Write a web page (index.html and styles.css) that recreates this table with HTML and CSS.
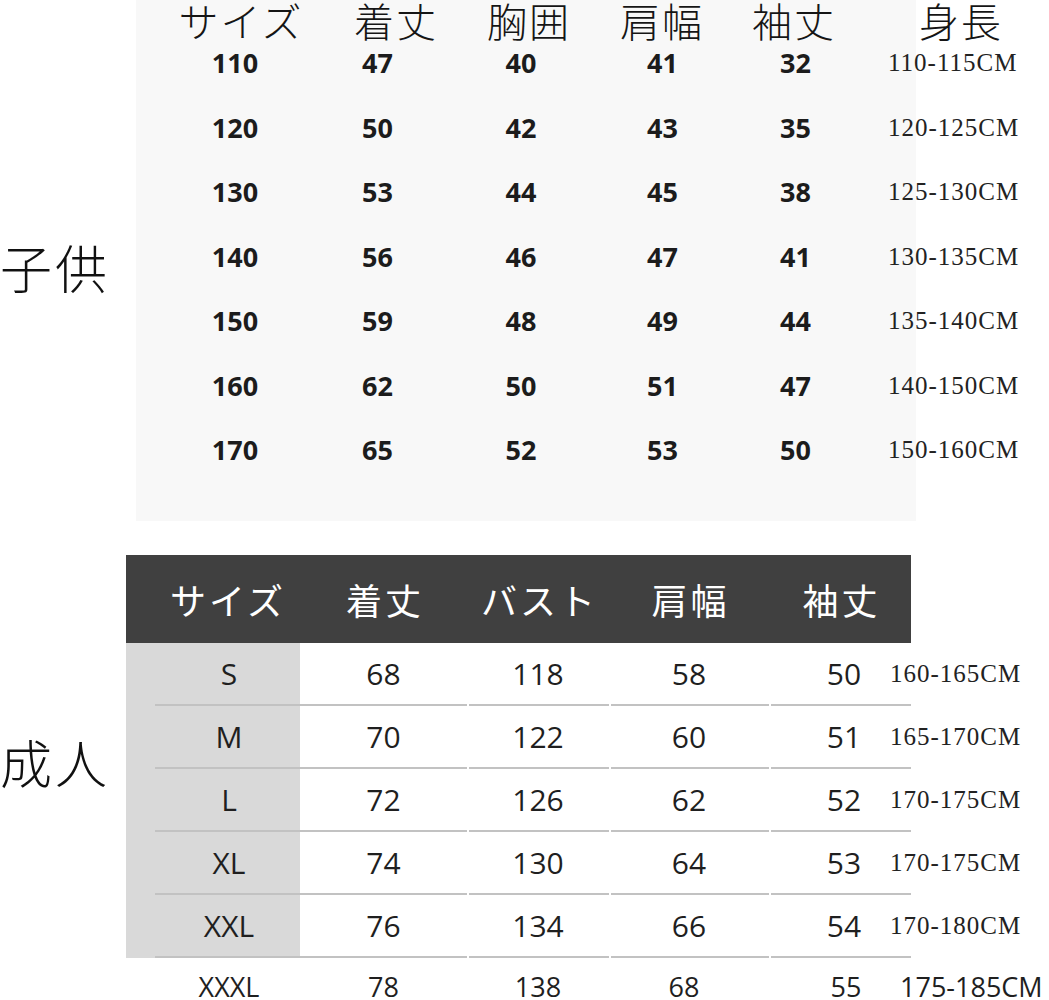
FILE: index.html
```html
<!DOCTYPE html>
<html lang="ja">
<head>
<meta charset="utf-8">
<title>サイズ表</title>
<link rel="stylesheet" href="styles.css">
</head>
<body>
<div class="page">
  <section class="kids">
    <div class="side kids-side"><span class="label">子供</span></div>
    <div class="kids-box">
      <div class="kids-head">
        <div>サイズ</div><div>着丈</div><div>胸囲</div><div>肩幅</div><div>袖丈</div><div>身長</div>
      </div>
      <div class="kids-body">
        <div class="n">110</div><div class="n">47</div><div class="n">40</div><div class="n">41</div><div class="n">32</div><div class="h">110-115CM</div>
        <div class="n">120</div><div class="n">50</div><div class="n">42</div><div class="n">43</div><div class="n">35</div><div class="h">120-125CM</div>
        <div class="n">130</div><div class="n">53</div><div class="n">44</div><div class="n">45</div><div class="n">38</div><div class="h">125-130CM</div>
        <div class="n">140</div><div class="n">56</div><div class="n">46</div><div class="n">47</div><div class="n">41</div><div class="h">130-135CM</div>
        <div class="n">150</div><div class="n">59</div><div class="n">48</div><div class="n">49</div><div class="n">44</div><div class="h">135-140CM</div>
        <div class="n">160</div><div class="n">62</div><div class="n">50</div><div class="n">51</div><div class="n">47</div><div class="h">140-150CM</div>
        <div class="n">170</div><div class="n">65</div><div class="n">52</div><div class="n">53</div><div class="n">50</div><div class="h">150-160CM</div>
      </div>
    </div>
  </section>

  <section class="adult">
    <div class="side adult-side"><span class="label">成人</span></div>
    <div class="adult-main">
      <div class="adult-head">
        <div class="c1">サイズ</div><div>着丈</div><div>バスト</div><div>肩幅</div><div>袖丈</div>
      </div>
      <div class="arow">
        <div class="cells"><div class="sz">S</div><div class="c2">68</div><div>118</div><div>58</div><div class="c5">50</div></div>
        <div class="h">160-165CM</div>
      </div>
      <div class="arow">
        <div class="cells"><div class="sz">M</div><div class="c2">70</div><div>122</div><div>60</div><div class="c5">51</div></div>
        <div class="h">165-170CM</div>
      </div>
      <div class="arow">
        <div class="cells"><div class="sz">L</div><div class="c2">72</div><div>126</div><div>62</div><div class="c5">52</div></div>
        <div class="h">170-175CM</div>
      </div>
      <div class="arow">
        <div class="cells"><div class="sz">XL</div><div class="c2">74</div><div>130</div><div>64</div><div class="c5">53</div></div>
        <div class="h">170-175CM</div>
      </div>
      <div class="arow">
        <div class="cells"><div class="sz">XXL</div><div class="c2">76</div><div>134</div><div>66</div><div class="c5">54</div></div>
        <div class="h">170-180CM</div>
      </div>
      <div class="arow last">
        <div class="cells"><div class="sz">XXXL</div><div class="c2">78</div><div>138</div><div class="c4">68</div><div class="c5">55</div></div>
        <div class="h">175-185CM</div>
      </div>
    </div>
  </section>
</div>
</body>
</html>
```

FILE: styles.css
```css
html, body {
  margin: 0;
  padding: 0;
  background: #ffffff;
  overflow: hidden;
}

.page {
  width: 1049px;
}

/* ---------- side labels ---------- */
.side {
  flex: none;
}

.label {
  display: block;
  font-family: "Noto Sans CJK JP", sans-serif;
  font-weight: 300;
  font-size: 52px;
  line-height: 52px;
  letter-spacing: 3px;
  color: #111111;
  white-space: nowrap;
}

/* ---------- kids table ---------- */
.kids {
  display: flex;
  height: 521px;
}

.kids-side {
  width: 136px;
  display: flex;
  align-items: center;
  padding-top: 13px;
  box-sizing: border-box;
}

.kids-box {
  width: 780px;
  height: 521px;
  background: #f8f8f8;
}

.kids-head {
  display: grid;
  grid-template-columns: 210px 100px 166px 100px 164px 170px;
  width: 910px;
  height: 43px;
  font-family: "Noto Sans CJK JP", sans-serif;
  font-weight: 300;
  font-size: 40px;
  line-height: 40px;
  letter-spacing: 2px;
  text-align: center;
  color: #151515;
  white-space: nowrap;
}

.kids-body {
  display: grid;
  grid-template-columns: 198px 87px 200px 83px 183px 150px;
  grid-auto-rows: 64.5px;
  width: 901px;
}

.kids-body .n {
  font-family: "Open Sans", "Noto Sans", sans-serif;
  font-weight: 700;
  font-size: 27px;
  line-height: 40px;
  text-align: center;
  color: #1c1c1c;
}

.kids-body .h {
  font-family: "Liberation Serif", serif;
  font-size: 25px;
  line-height: 40px;
  letter-spacing: 1px;
  padding-left: 1px;
  color: #222222;
  white-space: nowrap;
}

/* ---------- adult table ---------- */
.adult {
  display: flex;
  margin-top: 34px;
}

.adult-side {
  width: 126px;
  padding-top: 181px;
  box-sizing: border-box;
}

.adult-main {
  width: 923px;
}

.adult-head {
  display: grid;
  grid-template-columns: 174px 167px 142px 160px 142px;
  align-items: center;
  width: 785px;
  height: 88px;
  background: #404040;
  font-family: "Noto Sans CJK JP", sans-serif;
  font-size: 36px;
  line-height: 36px;
  letter-spacing: 3px;
  color: #ffffff;
  text-align: center;
  white-space: nowrap;
}

.adult-head > div {
  padding-left: 3px;
}

.adult-head > .c1 {
  padding-left: 30px;
}

.arow {
  display: flex;
  height: 63px;
}

.cells {
  flex: none;
  display: grid;
  grid-template-columns: 174px 167px 142px 160px 142px;
  width: 785px;
}

.cells > div {
  font-family: "Open Sans", "Noto Sans", sans-serif;
  font-size: 30px;
  line-height: 61px;
  text-align: center;
  color: #1f1f1f;
  background: linear-gradient(#c2c2c2, #c2c2c2) right bottom / calc(100% - 2px) 2px no-repeat;
}

.cells > .c2 {
  background-size: 100% 2px;
}

.cells > .c5 {
  padding-left: 8px;
}

.cells > .sz {
  padding-left: 32px;
  background:
    linear-gradient(#c2c2c2, #c2c2c2) right bottom / calc(100% - 29px) 2px no-repeat,
    #d9d9d9;
}

.arow .h {
  margin-left: -21px;
  font-family: "Liberation Serif", serif;
  font-size: 25px;
  line-height: 61px;
  letter-spacing: 1px;
  color: #222222;
  white-space: nowrap;
}

/* last (XXXL) row */
.arow.last {
  height: 58px;
}

.arow.last .cells > div {
  font-size: 27px;
  line-height: 58px;
  background: none;
}

.arow.last .cells > .c4 {
  padding-right: 10px;
}

.arow.last .cells > .c5 {
  padding-left: 12px;
}

.arow.last .h {
  margin-left: -11px;
  font-family: "Open Sans", "Noto Sans", sans-serif;
  font-size: 27px;
  line-height: 58px;
  letter-spacing: 0;
  color: #1f1f1f;
}
```
